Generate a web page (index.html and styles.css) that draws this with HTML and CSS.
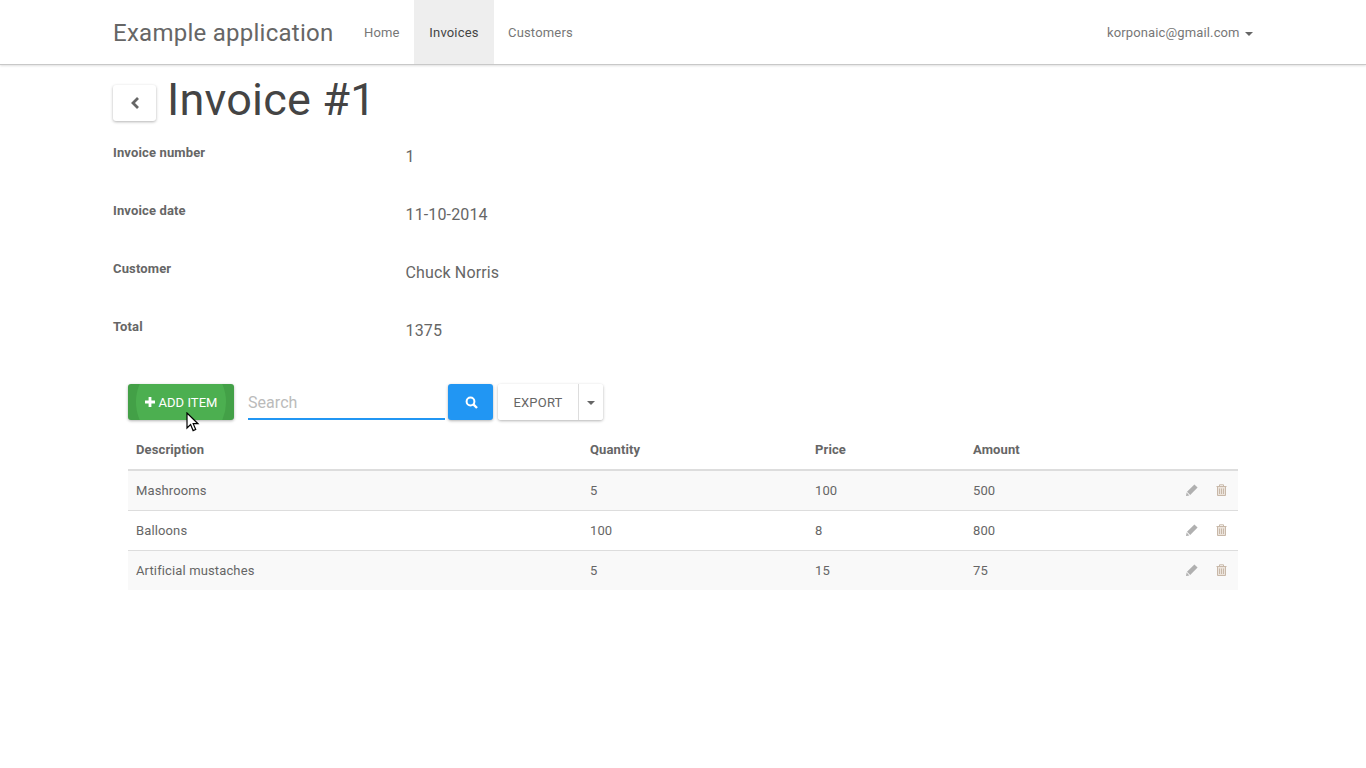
FILE: index.html
```html
<!DOCTYPE html>
<html lang="en">
<head>
<meta charset="utf-8">
<title>Example application</title>
<link rel="stylesheet" href="styles.css">
</head>
<body>
<nav class="navbar">
  <div class="container nav-inner">
    <a class="brand">Example application</a>
    <ul class="nav-links">
      <li><a>Home</a></li>
      <li class="active"><a>Invoices</a></li>
      <li><a>Customers</a></li>
    </ul>
    <a class="user">korponaic@gmail.com <span class="caret"></span></a>
  </div>
</nav>
<main class="container">
  <div class="title-row">
    <button class="back-btn" aria-label="Back">
      <svg width="10" height="14" viewBox="0 0 10 14"><path d="M8 2 3 7l5 5" fill="none" stroke="#666" stroke-width="2.8"/></svg>
    </button>
    <h1>Invoice #1</h1>
  </div>
  <dl class="details">
    <div class="detail"><dt>Invoice number</dt><dd>1</dd></div>
    <div class="detail"><dt>Invoice date</dt><dd>11-10-2014</dd></div>
    <div class="detail"><dt>Customer</dt><dd>Chuck Norris</dd></div>
    <div class="detail"><dt>Total</dt><dd>1375</dd></div>
  </dl>
  <section class="panel">
    <div class="toolbar">
      <button class="btn-add">
        <span class="ripple"></span>
        <span class="add-label"><svg width="10" height="10" viewBox="0 0 10 10"><path d="M3.6 0h2.8v3.6H10v2.8H6.4V10H3.6V6.4H0V3.6h3.6z" fill="#fff"/></svg>ADD ITEM</span>
      </button>
      <div class="search">Search</div>
      <button class="btn-search" aria-label="Search">
        <svg width="13" height="13" viewBox="0 0 13 13"><circle cx="5.5" cy="5.5" r="3.9" fill="none" stroke="#fff" stroke-width="2"/><path d="M8.4 8.4 12 12" stroke="#fff" stroke-width="2.4"/></svg>
      </button>
      <div class="export">
        <button class="btn-export">EXPORT</button>
        <button class="btn-caret" aria-label="More"><span class="caret"></span></button>
      </div>
    </div>
    <table class="grid">
      <thead>
        <tr><th class="c1">Description</th><th class="c2">Quantity</th><th class="c3">Price</th><th class="c4">Amount</th><th class="c5"></th></tr>
      </thead>
      <tbody>
        <tr><td>Mashrooms</td><td>5</td><td>100</td><td>500</td><td class="actions">
          <svg class="i-edit" width="12" height="12" viewBox="0 0 12 12"><path d="M8.4.4 11.6 3.6 4.2 11 1 7.8zM.6 8.6 3.4 11.4 0 12z" fill="#b0b0b0"/></svg>
          <svg class="i-trash" width="11" height="12" viewBox="0 0 11 12"><path d="M1.5 3h8v8.5h-8z" fill="#ece4dc"/><path d="M.5 2.5h10M3.5 2.2V.8h4v1.4M1.5 3v8.5h8V3M3.5 4.5v5.5M5.5 4.5v5.5M7.5 4.5v5.5" fill="none" stroke="#c8b8a8" stroke-width="1"/></svg>
        </td></tr>
        <tr><td>Balloons</td><td>100</td><td>8</td><td>800</td><td class="actions">
          <svg class="i-edit" width="12" height="12" viewBox="0 0 12 12"><path d="M8.4.4 11.6 3.6 4.2 11 1 7.8zM.6 8.6 3.4 11.4 0 12z" fill="#b0b0b0"/></svg>
          <svg class="i-trash" width="11" height="12" viewBox="0 0 11 12"><path d="M1.5 3h8v8.5h-8z" fill="#ece4dc"/><path d="M.5 2.5h10M3.5 2.2V.8h4v1.4M1.5 3v8.5h8V3M3.5 4.5v5.5M5.5 4.5v5.5M7.5 4.5v5.5" fill="none" stroke="#c8b8a8" stroke-width="1"/></svg>
        </td></tr>
        <tr><td>Artificial mustaches</td><td>5</td><td>15</td><td>75</td><td class="actions">
          <svg class="i-edit" width="12" height="12" viewBox="0 0 12 12"><path d="M8.4.4 11.6 3.6 4.2 11 1 7.8zM.6 8.6 3.4 11.4 0 12z" fill="#b0b0b0"/></svg>
          <svg class="i-trash" width="11" height="12" viewBox="0 0 11 12"><path d="M1.5 3h8v8.5h-8z" fill="#ece4dc"/><path d="M.5 2.5h10M3.5 2.2V.8h4v1.4M1.5 3v8.5h8V3M3.5 4.5v5.5M5.5 4.5v5.5M7.5 4.5v5.5" fill="none" stroke="#c8b8a8" stroke-width="1"/></svg>
        </td></tr>
      </tbody>
    </table>
  </section>
</main>
<svg class="cursor" width="14" height="20" viewBox="0 0 14 20"><path d="M1 1v15l3.6-3.4 2.5 6 2.6-1.1-2.5-5.8H12z" fill="#fff" stroke="#000" stroke-width="1.2"/></svg>
</body>
</html>
```
FILE: styles.css
```css
* { box-sizing: border-box; }
html, body { margin: 0; padding: 0; }
body {
  font-family: Roboto, "Liberation Sans", sans-serif;
  font-size: 13px;
  color: #666;
  background: #fff;
}
.container { width: 1140px; margin: 0 auto; }
.navbar {
  height: 65px;
  background: #fff;
  border-bottom: 1px solid #c8c8c8;
  box-shadow: 0 1px 2px rgba(0,0,0,.12);
}
.nav-inner { display: flex; align-items: stretch; height: 64px; }
.brand { font-size: 24px; line-height: 66px; color: #666; width: 236px; letter-spacing: .26px; }
.nav-links { list-style: none; display: flex; margin: 0; padding: 0; }
.nav-links a { display: block; padding: 0 15px; line-height: 66px; height: 64px; letter-spacing: .17px; color: #777; }
.nav-links li:first-child a { padding-right: 14.3px; }
.nav-links .active a { background: #eee; color: #444; padding: 0 15.4px; }
.nav-links .active + li a { padding-left: 14px; }
.user { margin-left: auto; line-height: 66px; letter-spacing: .13px; color: #777; }
.caret {
  display: inline-block;
  width: 0; height: 0;
  margin-left: 2px;
  vertical-align: middle;
  border-top: 4px solid #666;
  border-left: 4px solid transparent;
  border-right: 4px solid transparent;
}
.title-row { display: flex; align-items: flex-start; height: 58px; }
.back-btn {
  width: 43px; height: 36px;
  margin-top: 20px; margin-right: 11px;
  display: flex; align-items: center; justify-content: center;
  background: #fff;
  border: 0; border-radius: 3px; padding: 0;
  box-shadow: 0 1px 3px rgba(0,0,0,.3);
}
h1 { margin: 8px 0 0; font-size: 45px; line-height: 54px; font-weight: 400; color: #444; letter-spacing: .2px; }
.details { margin: 0; padding: 0; }
.detail { display: flex; height: 58px; align-items: flex-start; }
dt { width: 292.5px; font-weight: 700; font-size: 13px; line-height: 18px; margin-top: 21px; color: #666; letter-spacing: .14px; }
dd { margin: 23px 0 0; font-size: 16px; line-height: 22px; color: #666; letter-spacing: .14px; }
.panel { margin: 29px 15px 0; }
.toolbar { display: flex; align-items: flex-start; height: 46px; }
.btn-add {
  position: relative;
  width: 106px; height: 36px;
  background: #43a047;
  border: 0; border-radius: 3px; padding: 0 0 0 1px;
  overflow: hidden;
  color: #fff;
  font: 13px Roboto, sans-serif;
  letter-spacing: .05px;
  box-shadow: 0 1px 3px rgba(0,0,0,.3);
}
.ripple {
  position: absolute; left: 8px; top: -27px;
  width: 90px; height: 90px;
  border-radius: 50%;
  background: #4caf50;
}
.add-label { position: relative; display: flex; align-items: center; justify-content: center; gap: 3px; }
.search {
  width: 197px; height: 36px;
  margin-left: 14px; margin-right: 3px;
  border-bottom: 2px solid #2196f3;
  font-size: 16px; line-height: 37px;
  color: #bbb;
  letter-spacing: .05px;
}
.btn-search {
  width: 45px; height: 36px;
  display: flex; align-items: center; justify-content: center;
  background: #2196f3;
  border: 0; border-radius: 3px; padding: 0 0 0 1px;
  box-shadow: 0 1px 3px rgba(0,0,0,.3);
}
.export {
  display: flex;
  margin-left: 5px;
  height: 36px;
  border-radius: 3px;
  box-shadow: 0 1px 3px rgba(0,0,0,.3);
  background: #fff;
}
.btn-export {
  width: 81px; height: 36px;
  background: #fff; border: 0; border-right: 1px solid #ddd; padding: 0;
  border-radius: 3px 0 0 3px;
  font: 13px Roboto, sans-serif;
  letter-spacing: .2px;
  color: #666;
}
.btn-caret { width: 24px; height: 36px; background: #fff; border: 0; padding: 0 2px 0 0; border-radius: 0 3px 3px 0; }
.grid { width: 1110px; border-collapse: collapse; table-layout: fixed; }
.grid th, .grid td { padding: 0 8px; text-align: left; color: #666; font-size: 13px; }
.grid th { height: 40px; font-weight: 700; border-bottom: 2px solid #ddd; letter-spacing: .12px; }
.grid td { height: 40px; border-bottom: 1px solid #ddd; letter-spacing: .13px; }
.grid tbody tr:nth-child(odd) { background: #f9f9f9; }
.grid tbody tr:last-child td { border-bottom: 0; }
.c1 { width: 454px; }
.c2 { width: 225px; }
.c3 { width: 158px; }
.c4 { width: 150px; }
.actions { text-align: right !important; padding-right: 11px !important; padding-bottom: 1px !important; line-height: 12px; }
.actions svg { vertical-align: top; }
.i-trash { margin-left: 15px; }
.cursor { position: absolute; left: 186px; top: 412px; }
```
